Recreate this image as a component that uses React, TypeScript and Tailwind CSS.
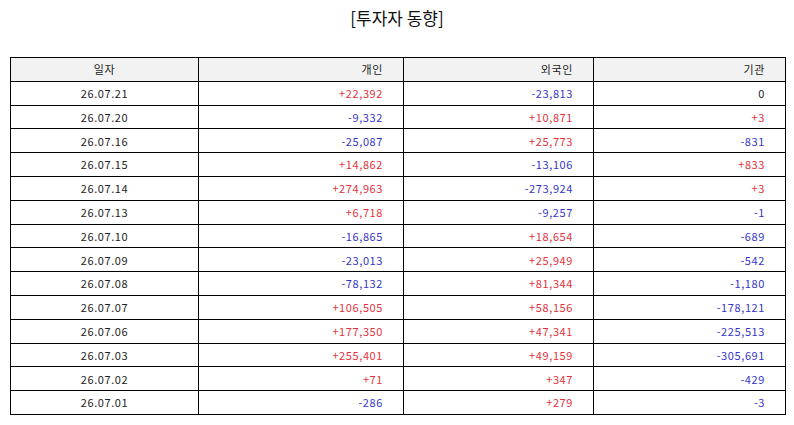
const rows: [string, string, string, string][] = [
  ["26.07.21", "+22,392", "-23,813", "0"],
  ["26.07.20", "-9,332", "+10,871", "+3"],
  ["26.07.16", "-25,087", "+25,773", "-831"],
  ["26.07.15", "+14,862", "-13,106", "+833"],
  ["26.07.14", "+274,963", "-273,924", "+3"],
  ["26.07.13", "+6,718", "-9,257", "-1"],
  ["26.07.10", "-16,865", "+18,654", "-689"],
  ["26.07.09", "-23,013", "+25,949", "-542"],
  ["26.07.08", "-78,132", "+81,344", "-1,180"],
  ["26.07.07", "+106,505", "+58,156", "-178,121"],
  ["26.07.06", "+177,350", "+47,341", "-225,513"],
  ["26.07.03", "+255,401", "+49,159", "-305,691"],
  ["26.07.02", "+71", "+347", "-429"],
  ["26.07.01", "-286", "+279", "-3"],
]

function tone(v: string) {
  if (v.startsWith("+")) return "text-[#e3313b]"
  if (v.startsWith("-")) return "text-[#3535c8]"
  return "text-[#222]"
}

export default function App() {
  return (
    <div
      className="w-[794px] h-[425px] bg-white"
      style={{ fontFamily: '"Noto Sans CJK KR", "Noto Sans", sans-serif' }}
    >
      <h1 className="pt-[6px] text-center text-[17px] leading-[24px] text-[#111]">[투자자 동향]</h1>
      <div className="px-[10px] pt-[27px]">
        <table className="w-[775px] border-collapse table-fixed text-[11px] tracking-[0.6px] text-[#222]">
          <colgroup>
            <col className="w-[188px]" />
            <col className="w-[205px]" />
            <col className="w-[190px]" />
            <col className="w-[192px]" />
          </colgroup>
          <thead>
            <tr className="h-[23.8px] bg-[#f2f2f2]">
              <th className="border border-black font-normal text-center p-0">일자</th>
              <th className="border border-black font-normal text-right p-0 pr-[20px]">개인</th>
              <th className="border border-black font-normal text-right p-0 pr-[20px]">외국인</th>
              <th className="border border-black font-normal text-right p-0 pr-[20px]">기관</th>
            </tr>
          </thead>
          <tbody>
            {rows.map(([d, a, b, c]) => (
              <tr key={d} className="h-[23.8px]">
                <td className="border border-black text-center p-0">{d}</td>
                <td className={`border border-black text-right p-0 pr-[20px] ${tone(a)}`}>{a}</td>
                <td className={`border border-black text-right p-0 pr-[20px] ${tone(b)}`}>{b}</td>
                <td className={`border border-black text-right p-0 pr-[20px] ${tone(c)}`}>{c}</td>
              </tr>
            ))}
          </tbody>
        </table>
      </div>
    </div>
  )
}
